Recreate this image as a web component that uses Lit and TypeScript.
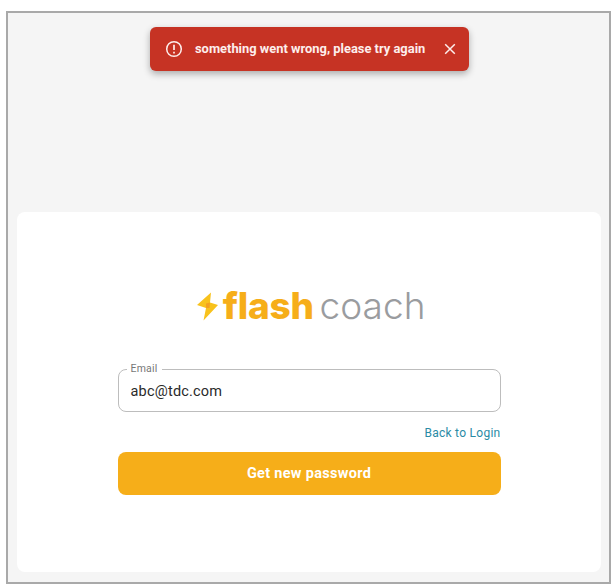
import { LitElement, html, css } from "lit";
import { customElement } from "lit/decorators.js";

@customElement("app-root")
export class AppRoot extends LitElement {
  static styles = css`
    :host { display: block; width: 616px; height: 587px; background: #fff; font-family: Roboto, "Liberation Sans", sans-serif; box-sizing: border-box; padding: 11px 5px 3px 6px; }
    .frame { position: relative; box-sizing: border-box; height: 573px; border: 2px solid #a9a9a9; background: #f5f5f5; padding: 199px 8px 10px 9px; display: flex; }
    .toast { position: absolute; left: 142px; top: 14px; width: 319px; height: 44px; box-sizing: border-box; background: #c63324; border-radius: 6px; box-shadow: 0 3px 7px rgba(0,0,0,.3); display: flex; align-items: center; color: #fdeeec; padding: 0 13px 0 15px; }
    .toast .msg { font-size: 12.9px; font-weight: 700; margin-left: 12px; flex: 1; white-space: nowrap; margin-top: -2px; }
    .card { flex: 1; background: #fff; border-radius: 8px; display: flex; flex-direction: column; align-items: center; }
    .logo { display: flex; align-items: center; height: 40px; margin-top: 74px; font-family: Inter, sans-serif; font-size: 37px; line-height: 40px; white-space: nowrap; margin-left: 4.5px; }
    .logo svg { margin-right: 5px; }
    .flash { color: #f6ae19; font-weight: 800; margin-right: 5.5px; letter-spacing: -.2px; }
    .coach { color: #9a9c9f; font-weight: 300; letter-spacing: .1px; }
    .form { width: 383px; margin-top: 43px; display: flex; flex-direction: column; }
    .field { position: relative; box-sizing: border-box; height: 43px; border: 1px solid #bdbdbd; border-radius: 8px; display: flex; align-items: center; padding: 1px 12px 0; font-size: 14.5px; color: #2a2a2a; letter-spacing: .2px; }
    .label { position: absolute; left: 8px; top: -7px; background: #fff; padding: 0 4px; font-size: 10.5px; line-height: 12px; color: #777; letter-spacing: .2px; }
    .back { align-self: flex-end; color: #2a8ba5; font-size: 12px; line-height: 14px; margin-top: 14px; letter-spacing: .27px; }
    .btn { height: 43px; margin-top: 12px; padding-bottom: 1px; box-sizing: border-box; background: #f6ae19; color: #fff; border-radius: 8px; display: flex; align-items: center; justify-content: center; font-size: 14.5px; font-weight: 700; letter-spacing: .3px; }
  `;

  render() {
    return html`
      <div class="frame">
        <div class="toast">
          <svg width="18" height="18" viewBox="0 0 18 18" fill="none" stroke="#fdeeec" stroke-width="1.5">
            <circle cx="9" cy="9" r="7.3"></circle>
            <path d="M9 4.8v5.2M9 11.8v1.6" stroke-width="1.7"></path>
          </svg>
          <span class="msg">something went wrong, please try again</span>
          <svg width="12" height="12" viewBox="0 0 12 12" fill="none" stroke="#fdeeec" stroke-width="1.5">
            <path d="M1.2 1.2l9.6 9.6M10.8 1.2l-9.6 9.6"></path>
          </svg>
        </div>
        <div class="card">
          <div class="logo">
            <svg width="21" height="29" viewBox="0 0 21 29">
              <path d="M14 .5 0 13l9 3-2.5 12.5L21 13l-8-2.500z" fill="#f8c21c"></path>
              <path d="M9 11.500l4-1-.5 5.500-3.500 0z" fill="#f4a020"></path>
            </svg>
            <span class="flash">flash</span><span class="coach">coach</span>
          </div>
          <div class="form">
            <div class="field"><span class="label">Email</span>abc@tdc.com</div>
            <div class="back">Back to Login</div>
            <div class="btn">Get new password</div>
          </div>
        </div>
      </div>
    `;
  }
}
